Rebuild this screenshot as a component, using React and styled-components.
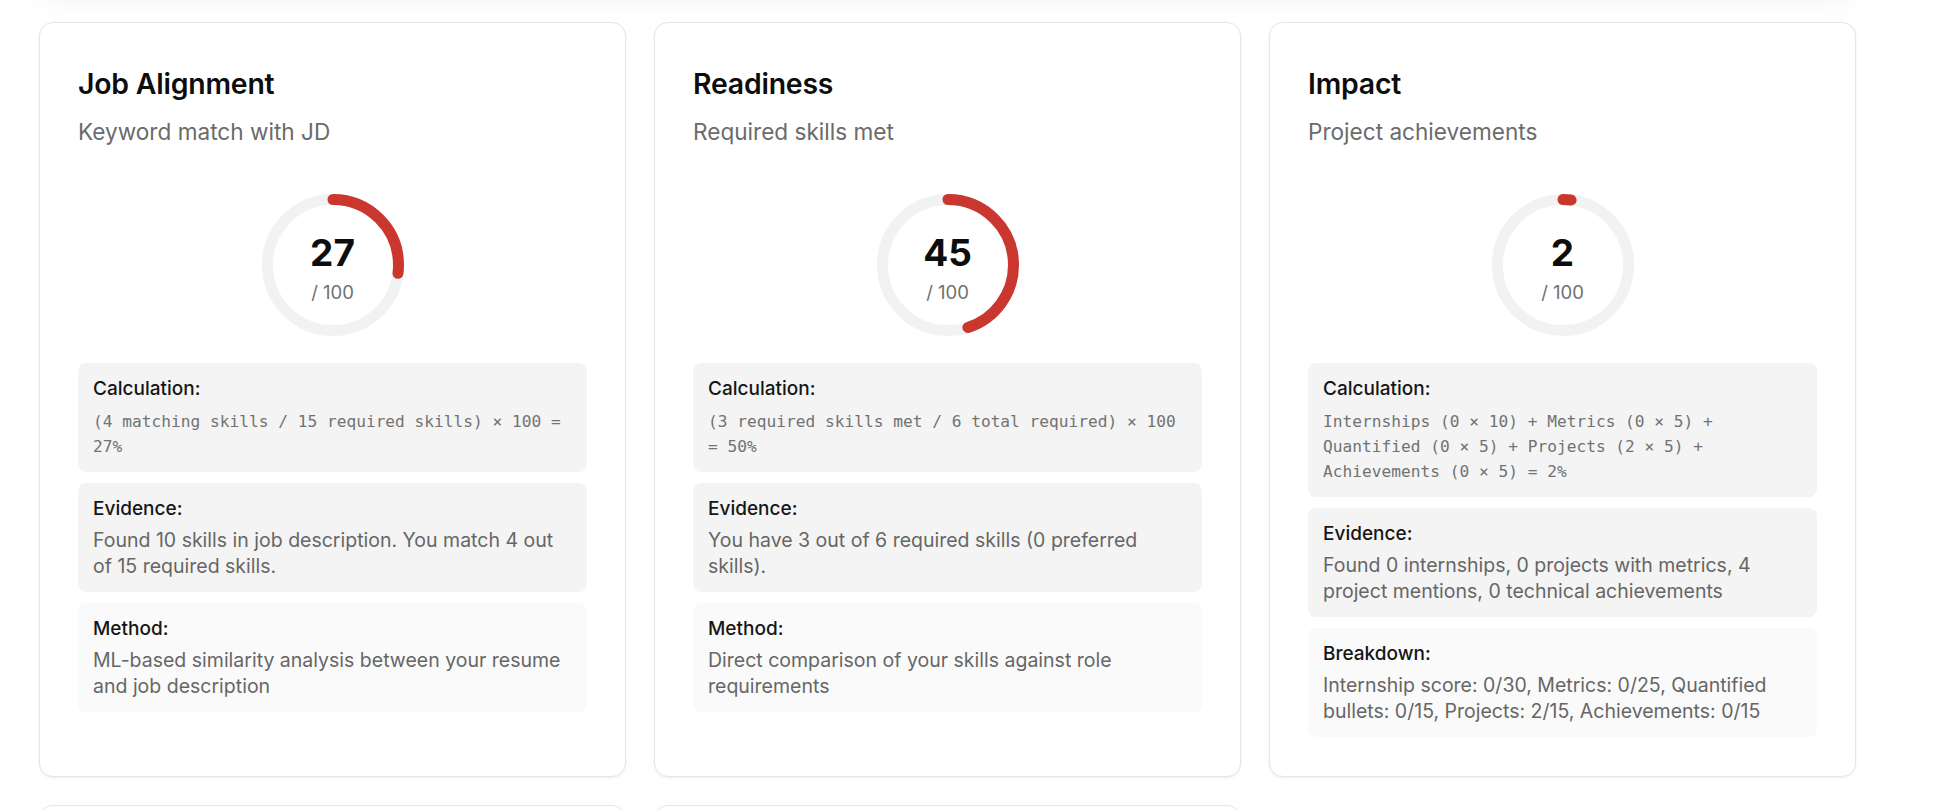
import React from 'react';
import styled, { createGlobalStyle } from 'styled-components';

const GlobalStyle = createGlobalStyle`
  html, body {
    margin: 0;
    padding: 0;
    background: #ffffff;
    overflow: hidden;
  }
  body {
    font-family: Inter, "Noto Sans", "Liberation Sans", sans-serif;
    color: #111;
  }
`;

const Page = styled.div`
  padding: 0 0 40px 39px;
`;

const PrevPanel = styled.div`
  width: 1817px;
  height: 60px;
  margin-top: -66px;
  margin-bottom: 28px;
  background: #fff;
  border-radius: 14px;
  box-shadow: 0 6px 24px rgba(0, 0, 0, 0.05);
`;

const Grid = styled.div`
  display: grid;
  grid-template-columns: repeat(3, 587px);
  gap: 28px;
  align-items: stretch;
`;

const Card = styled.div`
  box-sizing: border-box;
  background: #fff;
  border: 1px solid #e6e6e6;
  border-radius: 14px;
  box-shadow: 0 1px 3px rgba(0, 0, 0, 0.07);
  padding: 42px 38px 39px;
  display: flex;
  flex-direction: column;
  min-height: ${p => (p.$empty ? '320px' : 'auto')};
`;

const Title = styled.h3`
  margin: 0;
  font-size: 28.4px;
  line-height: 38px;
  font-weight: 600;
  color: #0d0d0d;
  letter-spacing: -0.2px;
`;

const Subtitle = styled.p`
  margin: 14px 0 0;
  font-size: 22.6px;
  line-height: 30px;
  color: #6b6b6b;
`;

const RingWrap = styled.div`
  position: relative;
  width: 142px;
  height: 142px;
  margin: 47px auto 27px;
`;

const RingLabel = styled.div`
  position: absolute;
  inset: 0;
  display: flex;
  flex-direction: column;
  align-items: center;
  justify-content: center;
  padding-top: 4px;
`;

const Score = styled.div`
  font-size: 37px;
  line-height: 44px;
  font-weight: 700;
  color: #0d0d0d;
`;

const OutOf = styled.div`
  margin-top: 5px;
  font-size: 18.5px;
  line-height: 24px;
  color: #707070;
`;

const Boxes = styled.div`
  display: flex;
  flex-direction: column;
  gap: 11px;
`;

const InfoBox = styled.div`
  background: ${p => (p.$light ? '#fafafa' : '#f4f4f4')};
  border-radius: 8px;
  padding: 14px 15px 13px;
`;

const Caption = styled.div`
  font-size: 19px;
  line-height: 24px;
  font-weight: 500;
  color: #161616;
`;

const BodyText = styled.div`
  margin-top: 6px;
  font-size: 19.5px;
  line-height: 26px;
  color: #666;
`;

const MonoText = styled.div`
  margin-top: 8px;
  font-family: "DejaVu Sans Mono", "Liberation Mono", monospace;
  font-size: 16.2px;
  line-height: 25px;
  color: #727272;
`;

const SecondRow = styled(Grid)`
  margin-top: 28px;
`;

const Ring = ({ value }) => {
  const r = 65.5;
  const c = 2 * Math.PI * r;
  const len = (value / 100) * c;
  return (
    <svg width="142" height="142" viewBox="0 0 142 142">
      <circle cx="71" cy="71" r={r} fill="none" stroke="#f2f2f2" strokeWidth="11" />
      <circle
        cx="71"
        cy="71"
        r={r}
        fill="none"
        stroke="#c9372f"
        strokeWidth="11"
        strokeLinecap="round"
        strokeDasharray={`${len} ${c}`}
        transform="rotate(-90 71 71)"
      />
    </svg>
  );
};

const metrics = [
  {
    key: 'align',
    title: 'Job Alignment',
    subtitle: 'Keyword match with JD',
    score: 27,
    ring: 27,
    calc: '(4 matching skills / 15 required skills) × 100 = 27%',
    evidence: 'Found 10 skills in job description. You match 4 out of 15 required skills.',
    extraLabel: 'Method:',
    extra: 'ML-based similarity analysis between your resume and job description',
  },
  {
    key: 'ready',
    title: 'Readiness',
    subtitle: 'Required skills met',
    score: 45,
    ring: 45,
    calc: '(3 required skills met / 6 total required) × 100 = 50%',
    evidence: 'You have 3 out of 6 required skills (0 preferred skills).',
    extraLabel: 'Method:',
    extra: 'Direct comparison of your skills against role requirements',
  },
  {
    key: 'impact',
    title: 'Impact',
    subtitle: 'Project achievements',
    score: 2,
    ring: 2,
    calc: 'Internships (0 × 10) + Metrics (0 × 5) + Quantified (0 × 5) + Projects (2 × 5) + Achievements (0 × 5) = 2%',
    evidence: 'Found 0 internships, 0 projects with metrics, 4 project mentions, 0 technical achievements',
    extraLabel: 'Breakdown:',
    extra: 'Internship score: 0/30, Metrics: 0/25, Quantified bullets: 0/15, Projects: 2/15, Achievements: 0/15',
  },
];

const MetricCard = ({ m }) => (
  <Card>
    <Title>{m.title}</Title>
    <Subtitle>{m.subtitle}</Subtitle>
    <RingWrap>
      <Ring value={m.ring} />
      <RingLabel>
        <Score>{m.score}</Score>
        <OutOf>/ 100</OutOf>
      </RingLabel>
    </RingWrap>
    <Boxes>
      <InfoBox>
        <Caption>Calculation:</Caption>
        <MonoText>{m.calc}</MonoText>
      </InfoBox>
      <InfoBox>
        <Caption>Evidence:</Caption>
        <BodyText>{m.evidence}</BodyText>
      </InfoBox>
      <InfoBox $light>
        <Caption>{m.extraLabel}</Caption>
        <BodyText>{m.extra}</BodyText>
      </InfoBox>
    </Boxes>
  </Card>
);

export default function App() {
  return (
    <>
      <GlobalStyle />
      <Page>
        <PrevPanel />
        <Grid>
          {metrics.map(m => (
            <MetricCard key={m.key} m={m} />
          ))}
        </Grid>
        <SecondRow>
          <Card $empty />
          <Card $empty />
        </SecondRow>
      </Page>
    </>
  );
}
